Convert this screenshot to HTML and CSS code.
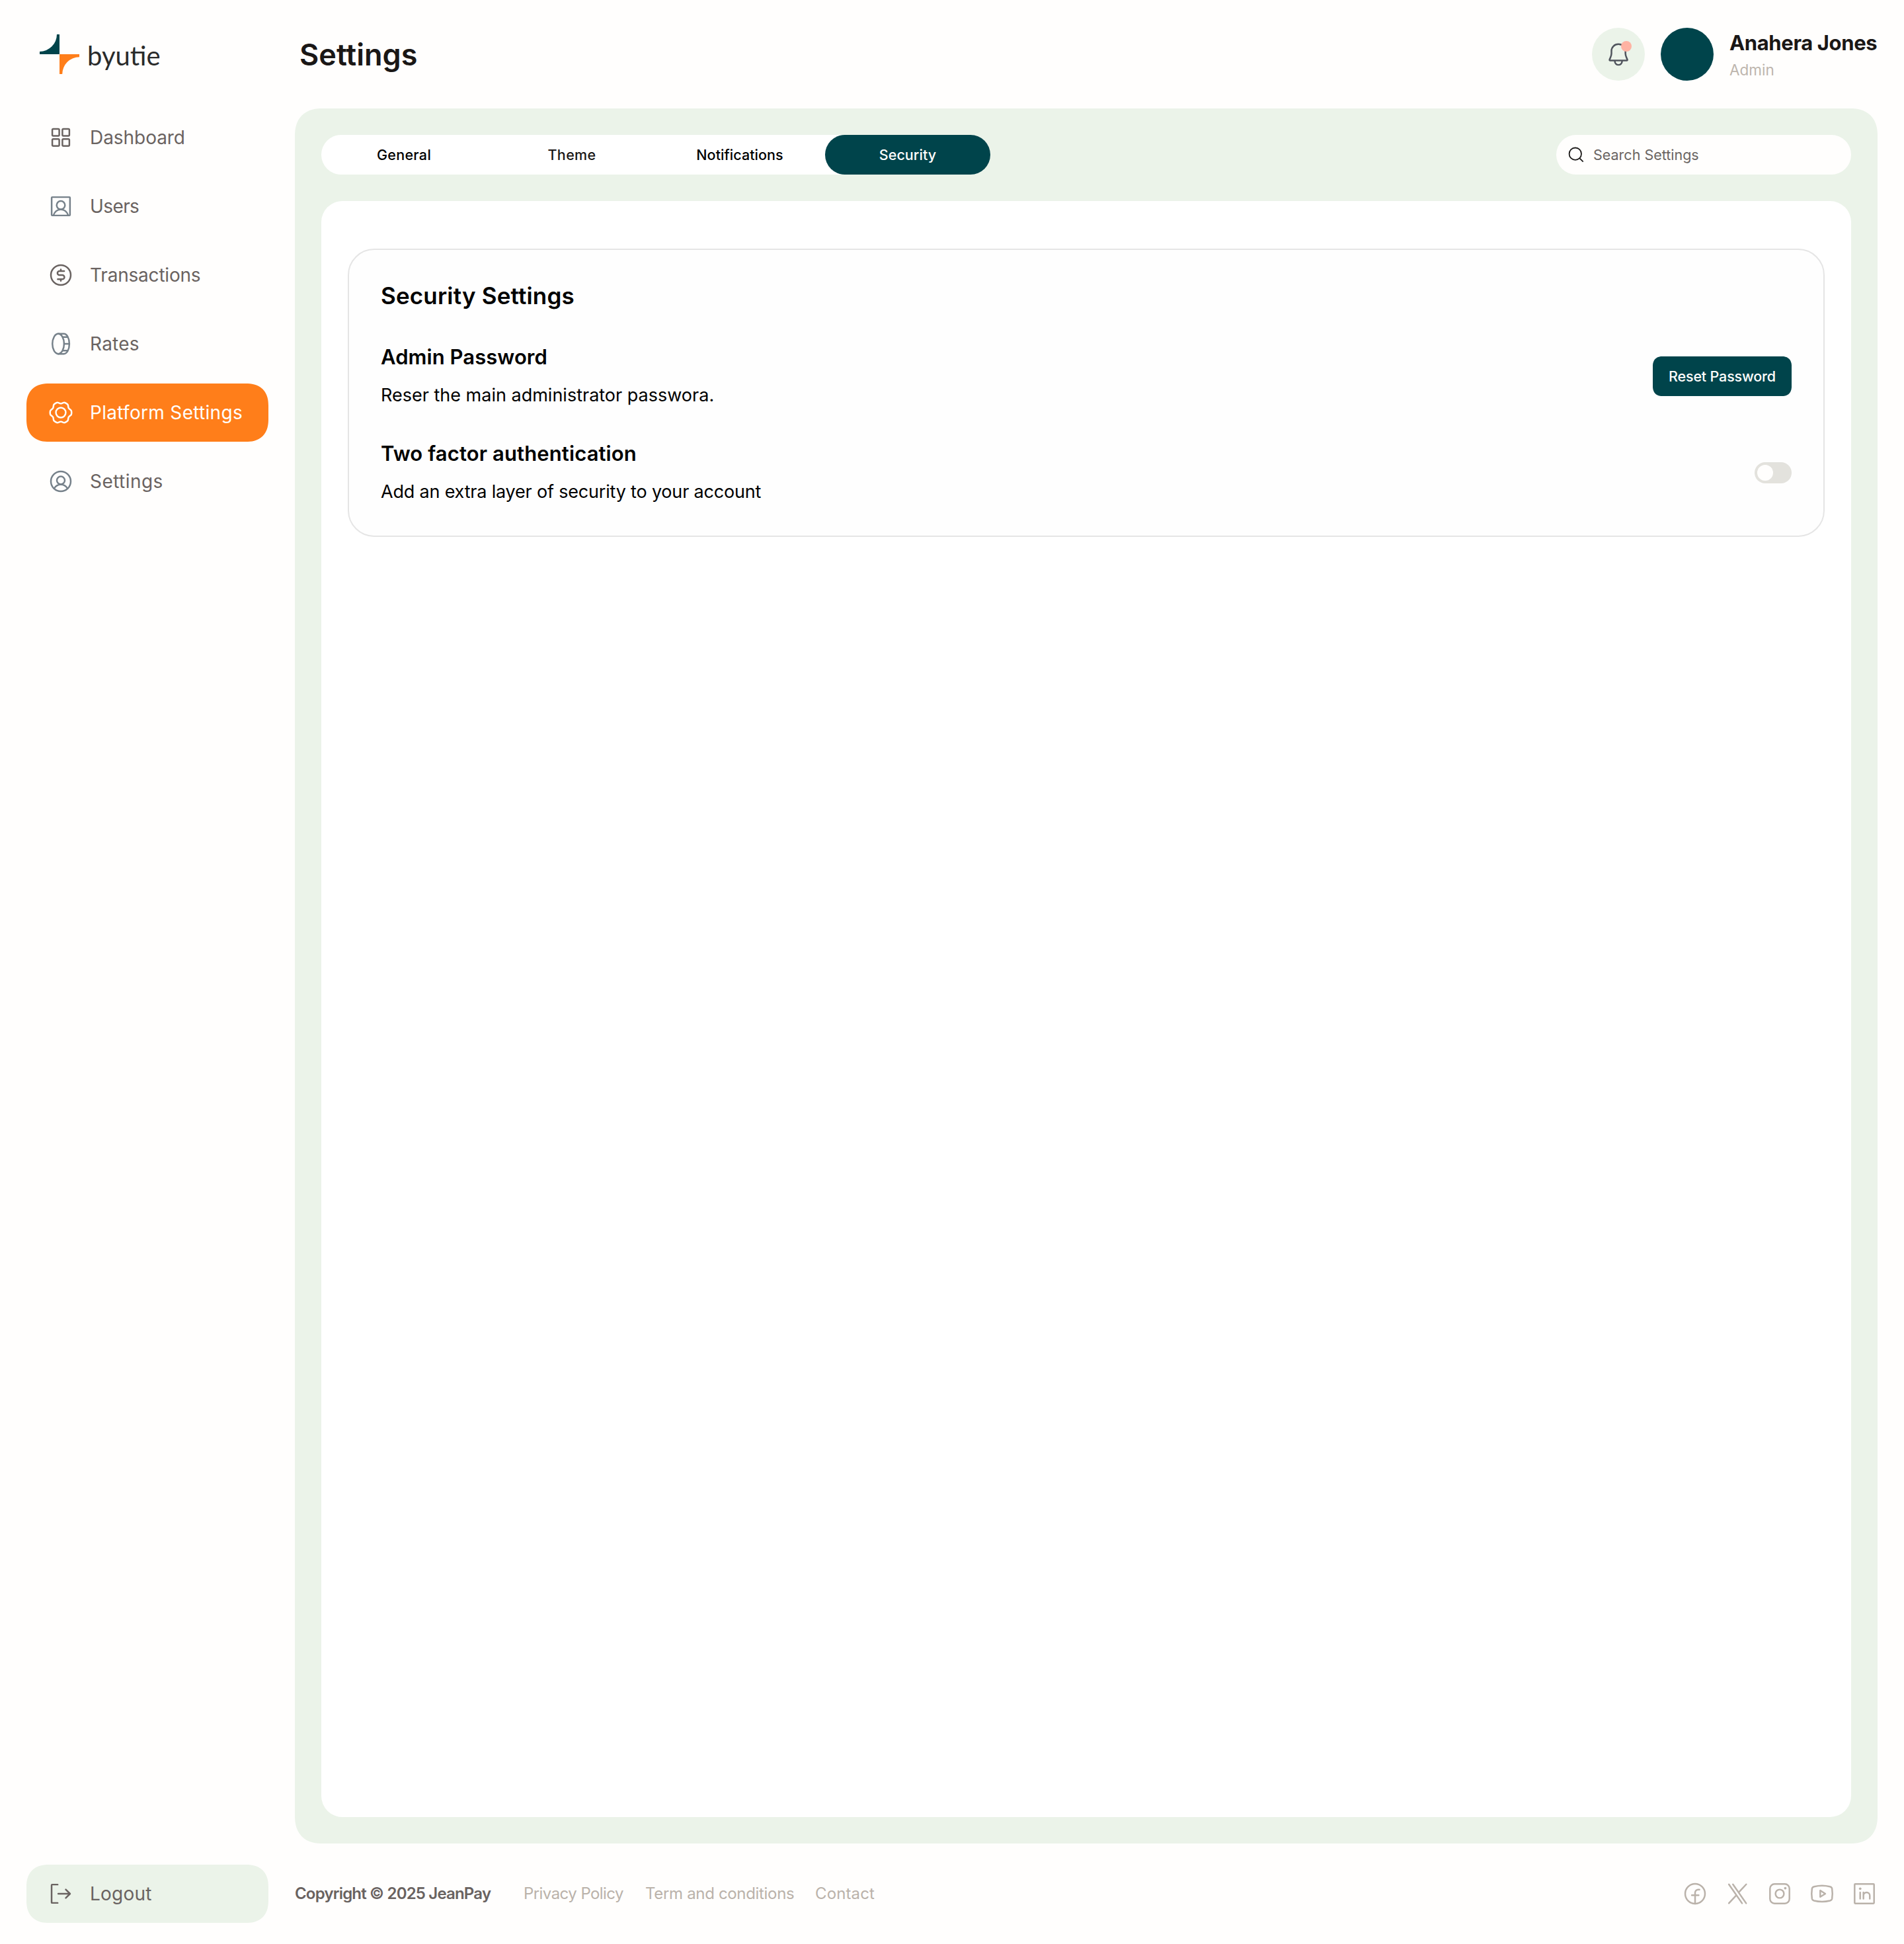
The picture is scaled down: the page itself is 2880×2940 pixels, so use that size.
FILE: index.html
```html
<!DOCTYPE html>
<html lang="en">
<head>
<meta charset="utf-8">
<title>Settings</title>
<link rel="stylesheet" href="styles.css">
</head>
<body>
<div class="app">
  <aside class="sidebar">
    <div class="brand">
      <svg class="brand-mark" viewBox="0 0 60 60">
        <path fill="#00444b" d="M30 0V30H0V25.9A26 26 0 0 0 26 0Z"/>
        <path fill="#ff7e1a" d="M30 30H60V34.2A26 26 0 0 0 34.2 60H30Z"/>
      </svg>
      <span class="brand-name">byutie</span>
    </div>
    <nav class="nav">
      <a class="nav-item nav-dashboard">
        <svg class="icon" viewBox="0 0 24 24"><rect x="3.4" y="3.4" width="7" height="7" rx="1"/><rect x="13.6" y="3.4" width="7" height="7" rx="1"/><rect x="3.4" y="13.5" width="7" height="7" rx="1"/><rect x="13.6" y="13.5" width="7" height="7" rx="1"/></svg>
        <span>Dashboard</span>
      </a>
      <a class="nav-item nav-users">
        <svg class="icon icon-slate" viewBox="0 0 24 24"><rect x="2.75" y="2.75" width="18.5" height="18.5" rx=".6"/><circle cx="12" cy="10.9" r="4.2"/><path d="M4.6 21.1C5.6 17.5 8.6 15.1 12 15.1s6.4 2.4 7.4 6"/></svg>
        <span>Users</span>
      </a>
      <a class="nav-item nav-transactions">
        <svg class="icon" viewBox="0 0 24 24"><circle cx="12" cy="12" r="10"/><path d="M15.4 8H10.6a2 2 0 0 0-2 2 2 2 0 0 0 2 2h2.9a2.1 2.1 0 0 1 0 4.2H8.9M12 6.4V8M12 16.2v1.6"/></svg>
        <span>Transactions</span>
      </a>
      <a class="nav-item nav-rates">
        <svg class="icon icon-slate" viewBox="0 0 24 24"><ellipse cx="9.4" cy="12" rx="5.9" ry="10.1"/><path d="M9.4 1.9H15c3.2 0 5.6 4.5 5.6 10.1s-2.4 10.1-5.6 10.1H9.4M14 5.2h4.4M15.3 12h5.3M14 18.8h4.4"/></svg>
        <span>Rates</span>
      </a>
      <a class="nav-item nav-platform active">
        <svg class="icon" viewBox="-12 -12 24 24"><circle r="4.95"/><path d="M10.8-.8V.8Q10.8 2.1 9.76 2.89L8.5 3.85Q7.7 4.45 7.58 5.44L7.38 7.01Q7.22 8.3 6.09 8.95L4.71 9.75Q3.58 10.4 2.38 9.9L.92 9.29Q0 8.9-.92 9.29L-2.38 9.9Q-3.58 10.4-4.71 9.75L-6.09 8.95Q-7.22 8.3-7.38 7.01L-7.58 5.44Q-7.7 4.45-8.5 3.85L-9.76 2.89Q-10.8 2.1-10.8 .8V-.8Q-10.8-2.1-9.76-2.89L-8.5-3.85Q-7.7-4.45-7.58-5.44L-7.38-7.01Q-7.22-8.3-6.09-8.95L-4.71-9.75Q-3.58-10.4-2.38-9.9L-.92-9.29Q0-8.9 .92-9.29L2.38-9.9Q3.58-10.4 4.71-9.75L6.09-8.95Q7.22-8.3 7.38-7.01L7.58-5.44Q7.7-4.45 8.5-3.85L9.76-2.89Q10.8-2.1 10.8-.8Z"/></svg>
        <span>Platform Settings</span>
      </a>
      <a class="nav-item nav-settings">
        <svg class="icon icon-slate" viewBox="0 0 24 24"><circle cx="12" cy="12" r="10"/><circle cx="12" cy="11" r="4"/><path d="M5.2 19.2C6.7 16.6 9.2 15.1 12 15.1s5.3 1.5 6.8 4.1"/></svg>
        <span>Settings</span>
      </a>
    </nav>
    <a class="nav-item logout">
      <svg class="icon" viewBox="0 0 24 24"><path d="M8.8 2.75H3.2a.5.5 0 0 0-.5.5v17.5a.5.5 0 0 0 .5.5H8.8M9.4 12H21.2M17 7.7 21.3 12 17 16.3"/></svg>
      <span>Logout</span>
    </a>
  </aside>

  <main class="main">
    <header class="topbar">
      <h1 class="page-title">Settings</h1>
      <div class="account">
        <div class="bell">
          <svg class="icon" viewBox="0 0 24 24"><path d="M12 1.9C8 1.9 5 4.9 5 8.6V11.4C5 14 3.7 15.7 3.1 17.4Q2.8 18.35 3.7 18.35H20.4Q21.3 18.35 21 17.4C20.4 15.7 19.1 14 19.1 11.4V8.6C19.1 4.9 16 1.9 12 1.9ZM8.4 18.5v.6a3.65 3.65 0 0 0 7.3 0v-.6"/></svg>
          <span class="bell-dot"></span>
        </div>
        <div class="avatar"></div>
        <div class="who">
          <div class="who-name">Anahera Jones</div>
          <div class="who-role">Admin</div>
        </div>
      </div>
    </header>

    <section class="panel">
      <div class="toolbar">
        <div class="tabs">
          <div class="tab tab-general">General</div>
          <div class="tab tab-theme">Theme</div>
          <div class="tab">Notifications</div>
          <div class="tab active">Security</div>
        </div>
        <div class="search">
          <svg class="search-icon" viewBox="0 0 24 24"><circle cx="10.8" cy="10.7" r="9.2"/><path d="M17.4 17.3 22.7 22.6"/></svg>
          <span>Search Settings</span>
        </div>
      </div>
      <div class="sheet">
        <div class="card">
          <h2 class="card-title">Security Settings</h2>
          <div class="rows">
            <div class="row">
              <div class="row-text">
                <div class="row-title row-title-password">Admin Password</div>
                <div class="row-desc">Reser the main administrator passwora.</div>
              </div>
              <div class="button">Reset Password</div>
            </div>
            <div class="row">
              <div class="row-text">
                <div class="row-title row-title-2fa">Two factor authentication</div>
                <div class="row-desc row-desc-2fa">Add an extra layer of security to your account</div>
              </div>
              <div class="toggle"><span class="toggle-knob"></span></div>
            </div>
          </div>
        </div>
      </div>
    </section>

    <footer class="footer">
      <span class="copyright">Copyright © 2025 JeanPay</span>
      <div class="links">
        <span class="link-privacy">Privacy Policy</span>
        <span class="link-terms">Term and conditions</span>
        <span class="link-contact">Contact</span>
      </div>
      <div class="social">
        <svg class="icon" viewBox="0 0 24 24"><circle cx="12" cy="12" r="10"/><path d="M12 22V10.9a3.1 3.1 0 0 1 3.1-3.1h1.3M8.7 13.5h6.9"/></svg>
        <svg class="icon" viewBox="0 0 24 24"><path d="M3.4 2.5 16.7 21.6M7.5 2.5 20.8 21.6M20.9 2.5 13.5 10.4M10.7 13.7 3.4 21.6"/></svg>
        <svg class="icon" viewBox="0 0 24 24"><rect x="2.2" y="2.2" width="19.6" height="19.6" rx="4.6"/><circle cx="12" cy="12" r="4.25"/><circle class="dot" cx="17.6" cy="6.4" r="1.25"/></svg>
        <svg class="icon" viewBox="0 0 24 24"><path d="M4 4.8Q12 2.8 20 4.8 21.8 5.2 22.1 6.8 22.9 12 22.1 17 21.8 18.5 20 19 12 21 4 19 2.2 18.5 1.9 17 1.1 12 1.9 6.8 2.2 5.2 4 4.8Z"/><path d="M10.2 8.7V15.2L15.3 12Z"/></svg>
        <svg class="icon" viewBox="0 0 24 24"><rect x="2.2" y="2.2" width="19.6" height="19.6" rx=".6"/><path d="M7.8 10.6V17M11.1 17V10.6M11.1 13.8a3.2 3.2 0 0 1 6.4 0V17"/><circle class="dot" cx="7.8" cy="6.9" r="1.25"/></svg>
      </div>
    </footer>
  </main>
</div>
</body>
</html>
```
FILE: styles.css
```css
* {
  box-sizing: border-box;
  margin: 0;
}

body {
  background: #fffefd;
  color: #000;
  font-family: Inter, "Liberation Sans", sans-serif;
}

.app {
  display: grid;
  grid-template-columns: 366px 1fr;
  column-gap: 40px;
  height: 2940px;
  padding: 0 40px;
}

.icon {
  flex: none;
  width: 36px;
  height: 36px;
  overflow: visible;
  fill: none;
  stroke: currentColor;
  stroke-width: 1.65;
  stroke-linecap: round;
  stroke-linejoin: round;
}

.icon-slate {
  color: #76818a;
}

.dot {
  fill: currentColor;
  stroke: none;
}

/* Sidebar */

.sidebar {
  display: flex;
  flex-direction: column;
  padding-bottom: 32px;
}

.brand {
  display: flex;
  align-items: center;
  height: 164px;
  padding-left: 20px;
  gap: 12px;
}

.brand-mark {
  width: 60px;
  height: 60px;
}

.brand-name {
  color: #2a2b2b;
  font-family: Lato, sans-serif;
  font-size: 40px;
  line-height: 48px;
  margin-top: 3px;
}

.nav {
  display: flex;
  flex-direction: column;
  gap: 16px;
}

.nav-item {
  display: flex;
  align-items: center;
  gap: 26px;
  height: 88px;
  padding-left: 34px;
  border-radius: 34px;
  corner-shape: superellipse(1.25);
  color: #6a6361;
  font-size: 28px;
  white-space: nowrap;
}

.nav-dashboard { letter-spacing: -0.05px; }
.nav-users { letter-spacing: -0.6px; }
.nav-transactions { letter-spacing: -0.2px; }
.nav-rates { letter-spacing: 0.25px; }
.nav-platform { letter-spacing: 0.31px; }
.nav-settings { letter-spacing: 0.45px; }

.nav-item.active {
  background: #ff7e1a;
  color: #fffefd;
}

.logout {
  margin-top: auto;
  background: #ebf3e9;
  letter-spacing: 0.2px;
}

/* Main column */

.main {
  display: flex;
  flex-direction: column;
  min-width: 0;
}

.topbar {
  display: flex;
  align-items: center;
  justify-content: space-between;
  height: 164px;
  padding-left: 7px;
}

.page-title {
  color: #1a1716;
  font-size: 45px;
  font-weight: 600;
}

.account {
  display: flex;
  align-items: center;
  gap: 24px;
}

.bell {
  position: relative;
  display: flex;
  align-items: center;
  justify-content: center;
  width: 80px;
  height: 80px;
  border-radius: 50%;
  background: #ebf3e9;
  color: #50545d;
}

.bell-dot {
  position: absolute;
  top: 20px;
  left: 44px;
  width: 16px;
  height: 16px;
  border-radius: 50%;
  background: #ffb3a3;
}

.avatar {
  width: 80px;
  height: 80px;
  border-radius: 50%;
  background: #00444b;
}

.who {
  display: flex;
  flex-direction: column;
  gap: 2px;
  width: 224px;
  white-space: nowrap;
}

.who-name {
  color: #1a1716;
  font-size: 31px;
  font-weight: 700;
  line-height: 46px;
  letter-spacing: -0.36px;
}

.who-role {
  color: #bdb5ad;
  font-size: 22.5px;
  line-height: 32px;
}

/* Content panel */

.panel {
  display: flex;
  flex-direction: column;
  gap: 40px;
  height: 2624px;
  padding: 40px;
  border-radius: 42px;
  corner-shape: superellipse(1.25);
  background: #ebf3e9;
}

.toolbar {
  display: flex;
  justify-content: space-between;
}

.tabs {
  display: flex;
  gap: 4px;
  border-radius: 30px;
  background: #fff;
}

.tab {
  display: flex;
  align-items: center;
  justify-content: center;
  width: 250px;
  height: 60px;
  border-radius: 30px;
  font-size: 21.5px;
  font-weight: 500;
  letter-spacing: 0.06px;
}

.tab-general { letter-spacing: 0.3px; }
.tab-theme { letter-spacing: 0.33px; color: #1a1716; }

.tab.active {
  background: #00444b;
  color: #fffefd;
}

.search {
  display: flex;
  align-items: center;
  gap: 14px;
  width: 446px;
  height: 60px;
  padding-left: 18px;
  border-radius: 30px;
  background: #fffefd;
  color: #6a6563;
  font-size: 21.5px;
}

.search-icon {
  width: 24px;
  height: 24px;
  fill: none;
  stroke: #1c1a19;
  stroke-width: 1.8;
}

.sheet {
  flex: 1;
  padding: 72px 40px;
  border-radius: 32px;
  background: #fff;
}

.card {
  height: 436px;
  padding: 48px;
  border: 2px solid #e5e5e5;
  border-radius: 40px;
  background: #fefefe;
}

.card-title {
  font-size: 35px;
  font-weight: 600;
  line-height: 43px;
  letter-spacing: 0.17px;
  margin-bottom: 52px;
}

.rows {
  display: flex;
  flex-direction: column;
  gap: 50px;
}

.row {
  display: flex;
  align-items: center;
  justify-content: space-between;
}

.row-text {
  display: flex;
  flex-direction: column;
  gap: 20px;
  line-height: 38px;
}

.row-title {
  font-size: 31px;
  font-weight: 600;
}

.row-title-password { letter-spacing: 0.05px; }
.row-title-2fa { letter-spacing: 0.12px; }

.row-desc {
  font-size: 27px;
}

.row-desc-2fa { letter-spacing: -0.19px; }

.button {
  display: flex;
  align-items: center;
  justify-content: center;
  width: 210px;
  height: 60px;
  border-radius: 15px;
  corner-shape: superellipse(1.25);
  background: #00444b;
  color: #fffefd;
  font-size: 21.5px;
  font-weight: 500;
  letter-spacing: -0.17px;
}

.toggle {
  width: 56px;
  height: 32px;
  padding: 4px;
  border-radius: 16px;
  background: #e3e2dd;
}

.toggle-knob {
  display: block;
  width: 24px;
  height: 24px;
  border-radius: 50%;
  background: #fffefd;
}

/* Footer */

.footer {
  display: flex;
  align-items: center;
  height: 152px;
  padding-bottom: 1px;
  font-size: 24px;
  white-space: nowrap;
}

.copyright {
  width: 346px;
  color: #696260;
  font-weight: 600;
  letter-spacing: -0.81px;
}

.links {
  display: flex;
  color: #bab2aa;
}

.link-privacy { width: 184px; letter-spacing: -0.56px; }
.link-terms { width: 257px; letter-spacing: -0.33px; }
.link-contact { letter-spacing: 0.12px; }

.social {
  display: flex;
  gap: 28px;
  margin-left: auto;
  padding-right: 2px;
  color: #bab2aa;
}
```
